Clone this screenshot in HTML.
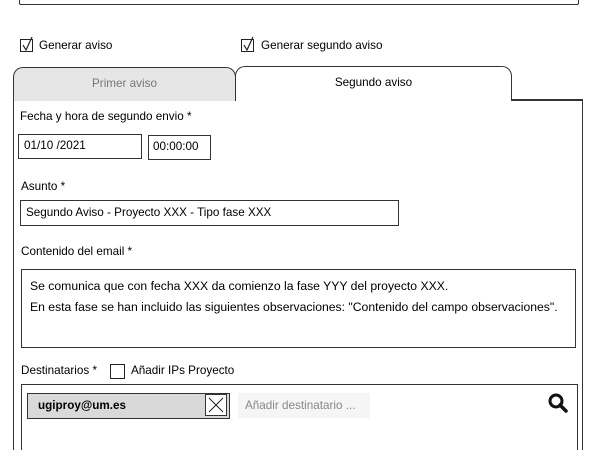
<html style="width:590px;height:450px;overflow:hidden"><head><style>
body{margin:0;width:590px;height:450px;overflow:hidden;background:#fff;font-family:"Liberation Sans",sans-serif;font-size:11.7px;color:#000;position:relative}
div{position:absolute;box-sizing:border-box}
.b{border:1.5px solid #333}
.t{white-space:nowrap}
.cb{width:13px;height:13px;border:1.3px solid #222}
</style></head><body>
<div class="b" style="left:19px;top:-10px;width:560px;height:15px;border-radius:2px"></div>

<div class="cb" style="left:20px;top:39px"></div>
<svg style="position:absolute;left:20px;top:35px" width="16" height="17"><path d="M3 10L6 15L12 2" fill="none" stroke="#222" stroke-width="1.2"/></svg>
<div class="t" style="left:39px;top:39px">Generar aviso</div>
<div class="cb" style="left:241px;top:39px"></div>
<svg style="position:absolute;left:241px;top:35px" width="16" height="17"><path d="M3 10L6 15L12 2" fill="none" stroke="#222" stroke-width="1.2"/></svg>
<div class="t" style="left:261px;top:39px">Generar segundo aviso</div>

<div class="b" style="left:13px;top:67px;width:223px;height:34px;background:#e6e6e6;border-radius:10px 10px 0 0;border-bottom:none"></div>
<div class="t" style="left:13px;top:77px;width:223px;text-align:center;color:#777">Primer aviso</div>
<div class="b" style="left:235px;top:66px;width:277px;height:35px;background:#fff;border-radius:10px 10px 0 0;border-bottom:none"></div>
<div class="t" style="left:235px;top:76px;width:277px;text-align:center">Segundo aviso</div>
<div style="left:13px;top:100px;width:570px;height:360px;border-left:1.5px solid #333;border-right:1.5px solid #333"></div>
<div style="left:511px;top:99px;width:72px;height:2px;background:#333"></div>

<div class="t" style="left:20px;top:110px">Fecha y hora de segundo envio *</div>
<div class="b" style="left:18px;top:134px;width:124px;height:25px"></div>
<div class="t" style="left:24px;top:139px">01/10 /2021</div>
<div class="b" style="left:148px;top:135px;width:63px;height:25px"></div>
<div class="t" style="left:153px;top:140px">00:00:00</div>

<div class="t" style="left:21px;top:180px">Asunto *</div>
<div class="b" style="left:20px;top:200px;width:379px;height:26px"></div>
<div class="t" style="left:26px;top:206px">Segundo Aviso - Proyecto XXX - Tipo fase XXX</div>

<div class="t" style="left:21px;top:245px">Contenido del email *</div>
<div class="b" style="left:21px;top:269px;width:555px;height:79px"></div>
<div class="t" style="left:30px;top:279px;font-size:12.2px">Se comunica que con fecha XXX da comienzo la fase YYY del proyecto XXX.</div>
<div class="t" style="left:30px;top:300px;font-size:12.2px">En esta fase se han incluido las siguientes observaciones: "Contenido del campo observaciones".</div>

<div class="t" style="left:21px;top:364px">Destinatarios *</div>
<div class="cb" style="left:110px;top:364px;width:15px;height:15px"></div>
<div class="t" style="left:131px;top:364px">Añadir IPs Proyecto</div>
<div class="b" style="left:21px;top:384px;width:557px;height:80px"></div>
<div class="b" style="left:27px;top:393px;width:203px;height:26px;background:#d9d9d9"></div>
<div class="t" style="left:38px;top:399px;font-weight:bold">ugiproy@um.es</div>
<div class="b" style="left:205px;top:394px;width:22px;height:22px;background:#fff;border-width:1.3px"></div>
<svg style="position:absolute;left:205px;top:394px" width="22" height="22"><path d="M4 4L18 18M18 4L4 18" stroke="#222" stroke-width="1"/></svg>
<div style="left:238px;top:393px;width:132px;height:25px;background:#f5f5f5"></div>
<div class="t" style="left:245px;top:399px;color:#888">Añadir destinatario ...</div>
<svg style="position:absolute;left:547px;top:392px" width="22" height="22"><circle cx="9" cy="9" r="6" fill="none" stroke="#111" stroke-width="3"/><path d="M13 13L19 19" stroke="#111" stroke-width="3.5" stroke-linecap="round"/></svg>
</body></html>
